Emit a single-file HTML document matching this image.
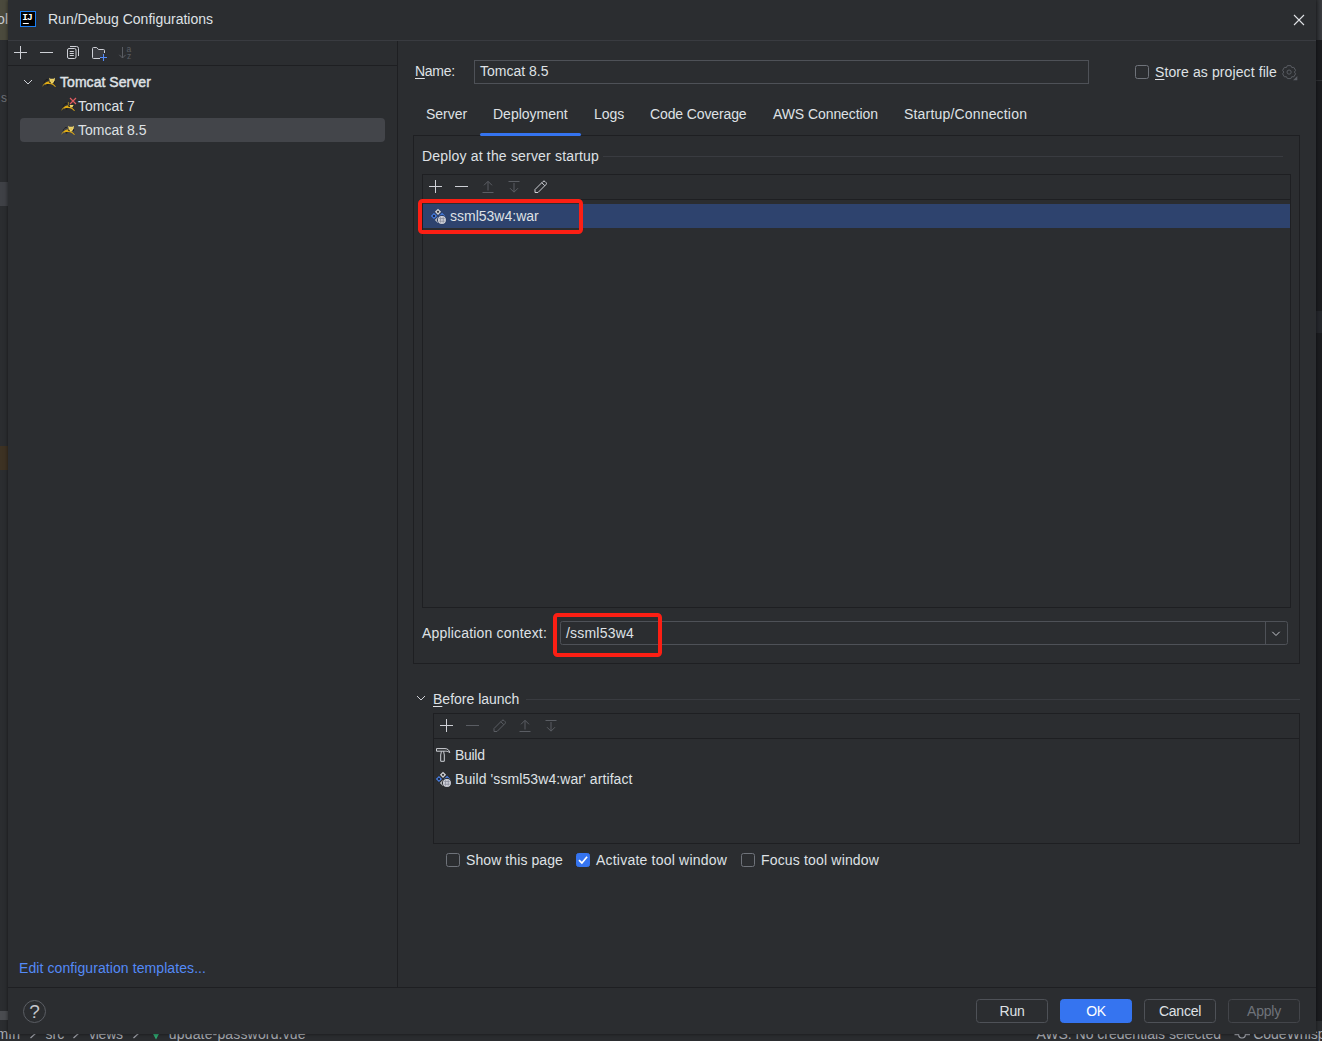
<!DOCTYPE html>
<html lang="en">
<head>
<meta charset="utf-8">
<title>Run/Debug Configurations</title>
<style>
*{box-sizing:border-box;margin:0;padding:0}
html,body{width:1322px;height:1041px;overflow:hidden;background:#1e1f22}
body{position:relative;font-family:"Liberation Sans",sans-serif;font-size:14px;color:#dfe1e5;line-height:16px}
.abs{position:absolute}
.t{position:absolute;white-space:nowrap;line-height:16px;height:16px}
.ic{position:absolute;width:16px;height:16px;overflow:visible}
.ic *{vector-effect:none}
u{text-decoration:underline;text-underline-offset:2px;text-decoration-thickness:1px}
/* backdrop (IDE behind dialog) */
#bg-left{left:0;top:0;width:10px;height:1041px;background:#2b2d30}
#bg-right{left:1314px;top:0;width:8px;height:1041px;background:#1b1c1f}
#bg-bottom{left:0;top:1021px;width:1322px;height:20px;background:#2b2d30}
/* dialog */
#dlg{left:8px;top:0;width:1308px;height:1034px;background:#2b2d30;box-shadow:0 0 4px 0 rgba(0,0,0,.55)}
.hl{position:absolute;height:1px;background:#1e1f22}
.vl{position:absolute;width:1px;background:#1e1f22}
.box{position:absolute;border:1px solid #1e1f22}
.sb{color:#a8abb2}
.cb{position:absolute;width:14px;height:14px;border:1px solid #6f737a;border-radius:2.5px}
.cb.on{background:#3574f0;border-color:#3574f0}
.btn{position:absolute;top:999px;width:72px;height:24px;border:1px solid #4e5157;border-radius:3.500px;text-align:center;line-height:22px;letter-spacing:-.25px}
</style>
</head>
<body>
<div id="bg-left" class="abs"></div>
<div id="bg-right" class="abs"></div>
<div id="bg-bottom" class="abs"></div>
<!-- IDE backdrop fragments -->
<div class="abs" style="left:0;top:0;width:10px;height:40px;background:#4b4a3d"></div>
<div class="t" style="left:-3px;top:11px;font-size:14px;color:#c9cbd0;letter-spacing:.3px">ol</div>
<div class="t" style="left:1px;top:90px;font-size:12px;color:#6f737a">s</div>
<div class="abs" style="left:0;top:182px;width:10px;height:24px;background:#3f4146"></div>
<div class="abs" style="left:0;top:446px;width:10px;height:24px;background:#3d3223"></div>
<div class="abs" style="left:0;top:1011px;width:10px;height:9px;background:#4a4c50"></div>
<div class="abs" style="left:1314px;top:0;width:8px;height:40px;background:linear-gradient(90deg,#2b2d30 25%,#3a3c40 100%)"></div>
<div class="abs" style="left:1314px;top:80px;width:8px;height:1px;background:#2e3034"></div>
<div class="abs" style="left:1314px;top:311px;width:8px;height:22px;background:#25272c"></div>
<div class="t sb" id="s1" style="left:-3.600px;top:1026px;letter-spacing:.5px">min</div>
<div class="t sb" id="s2" style="left:45.600px;top:1026px">src</div>
<div class="t sb" id="s3" style="left:88.900px;top:1026px;letter-spacing:-.2px">views</div>
<div class="t sb" id="s4" style="left:168.800px;top:1026px;letter-spacing:.16px">update-password.vue</div>
<div class="t sb" id="s5" style="left:1036.400px;top:1026px">AWS: No credentials selected</div>
<div class="t sb" id="s6" style="left:1253.200px;top:1026px">CodeWhisperer</div>
<svg class="abs" style="left:0;top:1021px" width="1322" height="20" viewBox="0 1021 1322 20"><g fill="none" stroke="#9da0a8" stroke-width="1.200"><path d="M30.500 1029l5 4.500-5 4.500M73.500 1029l5 4.500-5 4.500M133.500 1029l5 4.500-5 4.500"/><circle cx="1242" cy="1034.600" r="3.400"/><path d="M1234.500 1034.600h4.100M1245.400 1034.600h4.600"/></g><path d="M150.400 1029h11.200l-5.600 10.600z" fill="#2fa871"/></svg>
<div id="dlg" class="abs"></div>
<svg width="0" height="0" style="position:absolute"><defs>
<g id="tomcatbody"><path d="M3 9.400c.2-1.800 1.200-3.400 3-3.900" fill="none" stroke="#17181a" stroke-width=".6"/><path d="M1.200 12.900C2 10.700 3.500 9.200 5.400 8.100 6.500 7.500 7.700 7.200 8.800 7.200l1.500 1.600c1.900.8 3.500 2.200 4.600 4.200-.5.100-1-.1-1.300-.500-1.300-1.400-3-2.300-5-2.400-1.100-.100-2.200 0-3.200.300-.6.200-1.200.1-1.600-.2C2.700 10.900 1.900 11.800 1.200 12.900z" fill="#dda915"/><circle cx="6.100" cy="5.600" r=".7" fill="#17181a"/><path d="M5 10.800c.8-.5 1.800-.6 2.600-.3l-.5.900c-.7.200-1.500 0-2.100-.6z" fill="#17181a"/></g>
<g id="tomcat"><use href="#tomcatbody"/><path d="M8.100 3.800l1.400 1h3.100l1.400-1-.4 3-1.500 2.500h-2L8.700 7z" fill="#ecd36b"/><path d="M10.300 6.200h1.600l-.2 1.500h-1.200z" fill="#d9b94f"/><path d="M7.900 7.500l1.300.2.800 1.500-1.400-.1z" fill="#17181a"/><path d="M13.200 7.300l1 .2-.4 1.400-1.200-.2z" fill="#17181a"/></g>
<g id="tomcat2"><use href="#tomcatbody"/><path d="M8.400 4v3" stroke="#b89a2a" stroke-width=".7"/><path d="M9.500 7.100h4.400l-1.300 2.100h-2.200z" fill="#ecd36b"/><path d="M8 7.300l1.400.2.700 1.600-1.400-.2z" fill="#17181a"/><path d="M13.300 7.400l.9.300-.7 1.200-.8-.2z" fill="#17181a"/></g>
<g id="pencil" fill="none" stroke-width="1" transform="translate(.5 1)"><path d="M2.500 13.500v-3l8-8a1.400 1.400 0 0 1 2 0l1 1a1.400 1.400 0 0 1 0 2l-8 8z" stroke-linejoin="round"/><path d="M9.300 3.700l3 3"/></g>
<g id="artifact"><path d="M8 .7l3.100 3.100L8 6.900 4.900 3.800z" fill="#cfd0d4"/><circle cx="8" cy="3.800" r="1.150" fill="#33353a"/><path d="M12.100 5.700l2.500 2.500-2.500 2.500-2.500-2.500z" fill="none" stroke="#4a82e8" stroke-width="1.200"/><path d="M8 8.900l3.100 3.100L8 15.100 4.900 12z" fill="#cfd0d4"/><path d="M8 10.400l1.600 1.600L8 13.600 6.400 12z" fill="#33353a"/><path d="M3.950 4.900l3.100 3.100-3.100 3.100L.850 8z" fill="#4a82e8"/><circle cx="3.950" cy="8" r="1.250" fill="#1d2742"/><circle cx="11.900" cy="11.900" r="4.800" fill="currentColor"/><circle cx="11.900" cy="11.900" r="3.900" fill="#c9cbd4"/><path d="M8.300 10.500h7.200M8.300 13.300h7.200M10.500 8.300v7.200M13.300 8.300v7.200" stroke="#8b8e9c" stroke-width=".8" fill="none"/><circle cx="11.900" cy="11.900" r="3.550" fill="none" stroke="#d3d5dc" stroke-width=".7"/></g>
</defs></svg>
<!-- title bar -->
<div class="hl" style="left:8px;top:40px;width:1308px;background:#393b40"></div>
<svg class="abs" style="left:20px;top:11px" width="16" height="16" viewBox="0 0 16 16"><rect x=".5" y=".5" width="15" height="15" fill="#000" stroke="#1a7ff5" stroke-width="1"/><rect x="2.800" y="12" width="6" height="1" fill="#fff"/><text x="2.200" y="9.200" font-family="Liberation Mono,monospace" font-weight="bold" font-size="9.500" fill="#fff" letter-spacing="-1">IJ</text></svg>
<div class="t" id="title" style="left:48px;top:11px">Run/Debug Configurations</div>
<svg class="abs" style="left:1291px;top:12px" width="16" height="16" viewBox="0 0 16 16"><path d="M3 3l10 10M13 3L3 13" stroke="#dfe1e5" stroke-width="1.1" fill="none"/></svg>
<!-- left panel -->
<div class="vl" style="left:397px;top:41px;height:946px"></div>
<div class="hl" style="left:8px;top:65px;width:389px"></div>
<svg class="ic" style="left:12px;top:44px" viewBox="0 0 16 16"><path d="M8.5 2v13M2 8.5h13" stroke="#ced0d6" stroke-width="1" fill="none"/></svg>
<svg class="ic" style="left:38px;top:44px" viewBox="0 0 16 16"><path d="M2 8.5h13" stroke="#ced0d6" stroke-width="1" fill="none"/></svg>
<svg class="ic" style="left:64px;top:44px" viewBox="0 0 16 16"><g stroke="#ced0d6" stroke-width="1" fill="none"><rect x="3.5" y="4.5" width="8.500" height="10" rx="1.5"/><path d="M6 2.5h6.5a2 2 0 0 1 2 2V12"/><path d="M5.700 7.500h4.100M5.700 9.500h4.100M5.700 11.500h4.100"/></g></svg>
<svg class="ic" style="left:90px;top:44px" viewBox="0 0 16 16"><path d="M10 14.5H3.5a1 1 0 0 1-1-1v-9a1 1 0 0 1 1-1h3.2l1.8 2h5a1 1 0 0 1 1 1V9" stroke="#ced0d6" stroke-width="1" fill="#393b40"/><path d="M13.5 10v7M10 13.500h7" stroke="#548af7" stroke-width="1.1" fill="none"/></svg>
<svg class="ic" style="left:116px;top:44px" viewBox="0 0 16 16"><path d="M6.500 3v11M3.300 10.800l3.200 3.200 3.200-3.200" stroke="#5a5d63" stroke-width="1" fill="none"/><text x="10.600" y="7.800" font-family="Liberation Sans,sans-serif" font-size="8.500" fill="#5a5d63">a</text><text x="10.900" y="14.700" font-family="Liberation Sans,sans-serif" font-size="8.500" fill="#5a5d63">z</text></svg>
<!-- tree -->
<svg class="ic" style="left:20px;top:74px" viewBox="0 0 16 16"><path d="M4 6l4 4 4-4" stroke="#ced0d6" stroke-width="1" fill="none"/></svg>
<svg class="ic tc" style="left:41px;top:74px" viewBox="0 0 16 16"><use href="#tomcat"/></svg>
<div class="t" id="tr1" style="left:60px;top:74px;-webkit-text-stroke:.45px #dfe1e5;letter-spacing:.05px">Tomcat Server</div>
<svg class="ic tc" style="left:60px;top:98px" viewBox="0 0 16 16"><use href="#tomcat2"/><path d="M10 0l6 6M16 0l-6 6" stroke="#2b2d30" stroke-width="2.600" fill="none"/><path d="M10 0l6 6M16 0l-6 6" stroke="#e05b60" stroke-width="1.200" fill="none"/></svg>
<div class="t" id="tr2" style="left:78px;top:98px">Tomcat 7</div>
<div class="abs" style="left:20px;top:118px;width:365px;height:24px;border-radius:4px;background:#43454a"></div>
<svg class="ic tc" style="left:60px;top:122px" viewBox="0 0 16 16"><use href="#tomcat"/></svg>
<div class="t" id="tr3" style="left:78px;top:122px">Tomcat 8.5</div>
<div class="t" id="link" style="left:19px;top:960px;color:#548af7;letter-spacing:0.085px">Edit configuration templates...</div>
<!-- bottom bar -->
<div class="hl" style="left:8px;top:987px;width:1308px"></div>
<div class="abs" style="left:23px;top:1000px;width:23px;height:23px;border:1px solid #5a5d63;border-radius:50%"></div>
<div class="t" style="left:23px;top:1002px;width:23px;text-align:center;font-size:19px;line-height:20px;height:20px;color:#c4c6cc">?</div>
<div class="btn" style="left:976px" id="bRun">Run</div>
<div class="btn" style="left:1060px;background:#3574f0;border-color:#3574f0;color:#fff" id="bOK">OK</div>
<div class="btn" style="left:1144px" id="bCancel">Cancel</div>
<div class="btn" style="left:1228px;color:#6f737a;border-color:#43454a" id="bApply">Apply</div>
<!-- right panel header -->
<div class="t" id="lname" style="left:415px;top:63px;letter-spacing:-0.3px"><u>N</u>ame:</div>
<div class="abs" style="left:474px;top:60px;width:615px;height:24px;border:1px solid #4e5157"></div>
<div class="t" id="vname" style="left:480px;top:63px">Tomcat 8.5</div>
<div class="cb" style="left:1135px;top:65px"></div>
<div class="t" id="lstore" style="left:1155px;top:64px;letter-spacing:0.1px"><u>S</u>tore as project file</div>
<svg class="ic" style="left:1281px;top:64px" viewBox="0 0 16 16"><g stroke="#5a5d63" stroke-width="1" fill="none" stroke-linejoin="round"><path d="M6.37 1.63L9.83 1.63L10.75 3.51L12.84 3.36L14.57 6.37L13.40 8.10L14.57 9.83L12.84 12.84L10.75 12.69L9.83 14.57L6.37 14.57L5.45 12.69L3.36 12.84L1.63 9.83L2.80 8.10L1.63 6.37L3.36 3.36L5.45 3.51z"/><circle cx="8.100" cy="8.100" r="2.100"/></g><path d="M16.300 12v4.300h-4.300z" fill="#5a5d63"/></svg>
<!-- tabs -->
<div class="t" id="tab1" style="left:426px;top:106px">Server</div>
<div class="t" id="tab2" style="left:493px;top:106px">Deployment</div>
<div class="t" id="tab3" style="left:594px;top:106px">Logs</div>
<div class="t" id="tab4" style="left:650px;top:106px;letter-spacing:-0.12px">Code Coverage</div>
<div class="t" id="tab5" style="left:773px;top:106px;letter-spacing:-0.08px">AWS Connection</div>
<div class="t" id="tab6" style="left:904px;top:106px;letter-spacing:0.18px">Startup/Connection</div>
<div class="box" style="left:413px;top:135px;width:887px;height:529px"></div>
<div class="abs" style="left:480px;top:133px;width:101px;height:3px;border-radius:1.5px;background:#3574f0"></div>
<!-- deploy section -->
<div class="t" id="ldeploy" style="left:422px;top:148px;letter-spacing:0.18px">Deploy at the server startup</div>
<div class="hl" style="left:603px;top:156px;width:680px;background:#393b40"></div>
<div class="box" style="left:422px;top:174px;width:869px;height:434px"></div>
<div class="hl" style="left:423px;top:199px;width:867px"></div>
<svg class="ic" style="left:427px;top:178px" viewBox="0 0 16 16"><path d="M8.500 2v13M2 8.500h13" stroke="#ced0d6" stroke-width="1" fill="none"/></svg>
<svg class="ic" style="left:453px;top:178px" viewBox="0 0 16 16"><path d="M2 8.500h13" stroke="#ced0d6" stroke-width="1" fill="none"/></svg>
<svg class="ic" style="left:480px;top:178px" viewBox="0 0 16 16"><path d="M8 12.500V3.500M4 7.300l4-4 4 4M2.500 14.500h11" stroke="#5a5d63" stroke-width="1" fill="none"/></svg>
<svg class="ic" style="left:506px;top:178px" viewBox="0 0 16 16"><path d="M8 5v9M4 10.200l4 4 4-4M2.500 3.500h11" stroke="#5a5d63" stroke-width="1" fill="none"/></svg>
<svg class="ic" style="left:532px;top:178px" viewBox="0 0 16 16"><use href="#pencil" stroke="#ced0d6"/></svg>
<div class="abs" style="left:423px;top:204px;width:867px;height:24px;background:#2e436e"></div>
<svg class="ic" style="left:430px;top:208px;color:#2a3d66" viewBox="0 0 16 16"><use href="#artifact"/></svg>
<div class="t" id="lart" style="left:450px;top:208px">ssml53w4:war</div>
<div class="abs" style="left:418px;top:199px;width:165px;height:35px;border:4.500px solid #fc1f14;border-radius:4.500px"></div>
<!-- application context -->
<div class="t" id="lctx" style="left:422px;top:625px;letter-spacing:0.18px">Application context:</div>
<div class="abs" style="left:560px;top:621px;width:728px;height:24px;border:1px solid #4e5157;border-radius:2.500px"></div>
<div class="vl" style="left:1265px;top:622px;height:22px;background:#4e5157"></div>
<svg class="ic" style="left:1268px;top:625px" viewBox="0 0 16 16"><path d="M4.300 6.800l3.700 3.700 3.700-3.700" stroke="#c4c6cc" stroke-width="1" fill="none"/></svg>
<div class="t" id="vctx" style="left:566px;top:625px;letter-spacing:0.2px">/ssml53w4</div>
<div class="abs" style="left:553px;top:613px;width:109.300px;height:44px;border:4.200px solid #fc1f14;border-radius:4.500px"></div>
<!-- before launch -->
<svg class="ic" style="left:413px;top:690px" viewBox="0 0 16 16"><path d="M4 6l4 4 4-4" stroke="#ced0d6" stroke-width="1" fill="none"/></svg>
<div class="t" id="lbefore" style="left:433px;top:691px"><u>B</u>efore launch</div>
<div class="hl" style="left:526px;top:699px;width:774px;background:#393b40"></div>
<div class="box" style="left:433px;top:713px;width:867px;height:131px"></div>
<div class="hl" style="left:434px;top:738px;width:865px"></div>
<svg class="ic" style="left:438px;top:717px" viewBox="0 0 16 16"><path d="M8.500 2v13M2 8.500h13" stroke="#ced0d6" stroke-width="1" fill="none"/></svg>
<svg class="ic" style="left:464px;top:717px" viewBox="0 0 16 16"><path d="M2 8.500h13" stroke="#5a5d63" stroke-width="1" fill="none"/></svg>
<svg class="ic" style="left:491px;top:717px" viewBox="0 0 16 16"><use href="#pencil" stroke="#5a5d63"/></svg>
<svg class="ic" style="left:517px;top:717px" viewBox="0 0 16 16"><path d="M8 12.500V3.500M4 7.300l4-4 4 4M2.500 14.500h11" stroke="#5a5d63" stroke-width="1" fill="none"/></svg>
<svg class="ic" style="left:543px;top:717px" viewBox="0 0 16 16"><path d="M8 5v9M4 10.200l4 4 4-4M2.500 3.500h11" stroke="#5a5d63" stroke-width="1" fill="none"/></svg>
<svg class="ic" style="left:435px;top:747px" viewBox="0 0 16 16"><g stroke="#ced0d6" stroke-width="1" fill="none" stroke-linejoin="round"><path d="M1.500 1.600h8.500c2.600 0 4.300 1.600 4.800 4.100-1.300-1.100-2.600-1.500-4.200-1.500H1.500z"/><path d="M6.400 4.400L5.700 8v6.300h3.600V8l-.7-3.600"/></g></svg>
<div class="t" id="lb1" style="left:455px;top:747px;letter-spacing:-0.3px">Build</div>
<svg class="ic" style="left:435px;top:771px;color:#2b2d30" viewBox="0 0 16 16"><use href="#artifact"/></svg>
<div class="t" id="lb2" style="left:455px;top:771px;letter-spacing:0.09px">Build 'ssml53w4:war' artifact</div>
<!-- checkboxes -->
<div class="cb" style="left:446px;top:853px"></div>
<div class="t" id="c1" style="left:466px;top:852px;letter-spacing:.09px">Show this page</div>
<div class="cb on" style="left:576px;top:853px"></div>
<svg class="abs" style="left:576px;top:853px" width="14" height="14" viewBox="0 0 14 14"><path d="M3 7.100l2.900 3 5.200-6.300" stroke="#fff" stroke-width="1.700" fill="none"/></svg>
<div class="t" id="c2" style="left:596px;top:852px;letter-spacing:0.21px">Activate tool window</div>
<div class="cb" style="left:741px;top:853px"></div>
<div class="t" id="c3" style="left:761px;top:852px;letter-spacing:0.17px">Focus tool window</div>


</body>
</html>
